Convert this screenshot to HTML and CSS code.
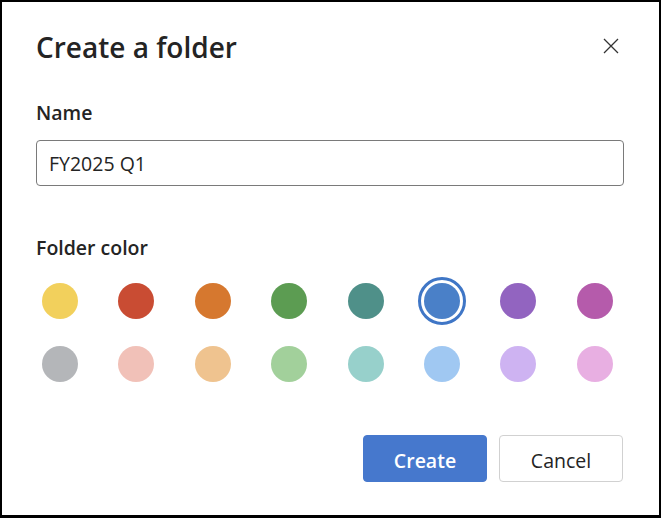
FILE: index.html
```html
<!DOCTYPE html>
<html lang="en">
<head>
    <meta charset="UTF-8">
    <meta name="viewport" content="width=device-width, initial-scale=1.0">
    <title>Create a folder</title>
    <link rel="stylesheet" href="styles.css">
</head>
<body>
    <div id="dialog">
        <div class="head">
            <h1 class="title">Create a folder</h1>
            <button type="button" class="close" aria-label="Close">
                <svg width="16" height="16" viewBox="0 0 16 16">
                    <path d="M1 1 L15 15 M15 1 L1 15" stroke="#333" stroke-width="1.3" fill="none"/>
                </svg>
            </button>
        </div>
        <label for="folder-name" class="field">Name</label>
        <input type="text" id="folder-name" class="name" value="FY2025 Q1">
        <div class="field color-label">Folder color</div>
        <ul class="swatches">
            <li><span class="dot" style="background:#f2d05c"></span></li>
            <li><span class="dot" style="background:#c94c33"></span></li>
            <li><span class="dot" style="background:#d6782f"></span></li>
            <li><span class="dot" style="background:#5c9c52"></span></li>
            <li><span class="dot" style="background:#4f9089"></span></li>
            <li class="selected"><span class="dot" style="background:#4a80c8"></span></li>
            <li><span class="dot" style="background:#9264c0"></span></li>
            <li><span class="dot" style="background:#b55bab"></span></li>
            <li><span class="dot" style="background:#b4b6b9"></span></li>
            <li><span class="dot" style="background:#f1c1b8"></span></li>
            <li><span class="dot" style="background:#efc38f"></span></li>
            <li><span class="dot" style="background:#a2d09b"></span></li>
            <li><span class="dot" style="background:#97d0cb"></span></li>
            <li><span class="dot" style="background:#a0c8f2"></span></li>
            <li><span class="dot" style="background:#ceb3f2"></span></li>
            <li><span class="dot" style="background:#e8afe2"></span></li>
        </ul>
        <div class="actions">
            <button type="button" class="btn primary">Create</button>
            <button type="button" class="btn">Cancel</button>
        </div>
    </div>
</body>
</html>
```

FILE: styles.css
```css
*{
    box-sizing: border-box;
}
body{
    margin: 0;
    font-family: "Open Sans", "Noto Sans", sans-serif;
    color: #242424;
}
#dialog{
    width: 661px; height: 518px;
    border: 2px solid #000; border-bottom-width: 3px;
    background: #fff;
    padding: 0 35px 0 34px;
    display: flex; flex-direction: column;
}
.head{
    display: flex; justify-content: space-between; align-items: center;
    margin-top: 28px;
}
.title{
    margin: 0;
    font-size: 28px; font-weight: 600; line-height: 34px;
}
.close{
    width: 24px; height: 24px; padding: 0; margin: -2px 1px 0 0;
    border: 0; background: none;
    display: flex; align-items: center; justify-content: center;
}
.field{
    font-size: 19.5px; font-weight: 600; line-height: 26px;
}
label.field{
    margin-top: 36px;
}
.name{
    margin-top: 14px;
    width: 100%; height: 46px;
    border: 1px solid #7a7a7a; border-radius: 4px;
    padding: 0 12px;
    font-family: inherit; font-size: 19.5px; color: #242424;
}
.color-label{
    margin-top: 49px;
}
.swatches{
    list-style: none; margin: 16px 0 0 0; padding: 0;
    display: grid; grid-template-columns: repeat(8, 48px);
    column-gap: 28.4px; row-gap: 15px;
}
.swatches li{
    width: 48px; height: 48px;
    display: flex; align-items: center; justify-content: center;
    border-radius: 50%;
}
.swatches li.selected{
    border: 3px solid #3f76c6;
}
.dot{
    width: 36px; height: 36px; border-radius: 50%;
}
.actions{
    margin-top: auto; margin-bottom: 33px; margin-right: 1px;
    display: flex; justify-content: flex-end; gap: 12px;
}
.btn{
    width: 124px; height: 47px; padding: 3px 0 0;
    border: 1px solid #d1d1d1; border-radius: 4px;
    background: #fff; color: #242424;
    font-family: inherit; font-size: 19.5px;
}
.btn.primary{
    border-color: #4678cd; background: #4678cd; color: #fff;
    font-weight: 600;
}
```
